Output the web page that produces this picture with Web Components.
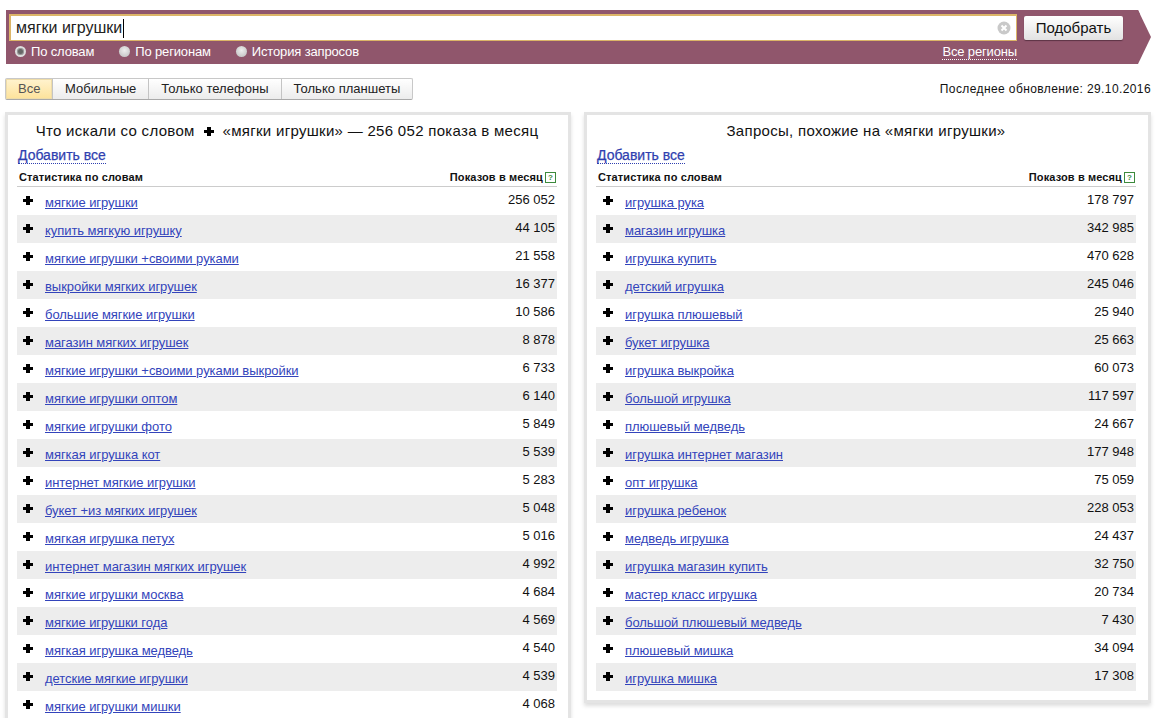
<!doctype html>
<html>
<head>
<meta charset="utf-8">
<style>
  html, body { margin: 0; height: 718px; overflow: hidden; background: #fff; }
  body { font: 13px "Liberation Sans", Arial, sans-serif; color: #000; }
</style>
</head>
<body>
<wp-search-bar query="мягки игрушки"></wp-search-bar>
<wp-toolbar updated="29.10.2016"></wp-toolbar>
<wp-results></wp-results>

<script>
class WpSearchBar extends HTMLElement {
  constructor() {
    super();
    this.attachShadow({ mode: "open" });
    const query = this.getAttribute("query");
    this.shadowRoot.innerHTML = `
      <style>
        :host { display: block; margin: 10px 14px 0 6px; height: 54px; box-sizing: border-box; background: #90566c; border-top: 4px solid #90566c; clip-path: polygon(0 0, 1132px 0, 1145px 27px, 1132px 54px, 0 54px); padding-left: 3px; }
        .top { display: flex; align-items: center; height: 27px; }
        .input { width: 1008px; height: 27px; box-sizing: border-box; border: 2px solid #dcb568; border-right-width: 1px; border-bottom-width: 1px; background: #fff; display: flex; align-items: center; padding: 0 5px; font-size: 16px; color: #222; }
        .caret { width: 1px; height: 19px; background: #000; margin-left: 1px; }
        .clear { margin-left: auto; }
        button { margin-left: 7px; width: 99px; height: 24px; border: 0; border-radius: 2px; padding: 0; font: 15px "Liberation Sans", Arial, sans-serif; color: #111; background: linear-gradient(#fff, #e2e2e2); box-shadow: 0 1px 1px #5d3345; }
        .opts { display: flex; align-items: flex-start; width: 1008px; box-sizing: border-box; height: 23px; padding: 3px 0 0 6px; color: #fff; font-size: 13px; line-height: 15px; }
        .opt { display: flex; align-items: center; gap: 5px; margin-right: 25px; letter-spacing: -0.15px; }
        .radio { width: 11px; height: 11px; border-radius: 50%; background: radial-gradient(circle at 50% 40%, #eee, #bbb); box-sizing: border-box; }
        .radio.on { background: #666; border: 2px solid #ddd; box-shadow: inset 0 0 0 1px #999; }
        .all { margin-left: auto; color: #fff; border-bottom: 1px dotted #fff; line-height: 15px; letter-spacing: -0.15px; }
      </style>
      <div class="top">
        <div class="input"><span>${query}</span><span class="caret"></span>
          <svg class="clear" width="14" height="14" viewBox="0 0 14 14"><circle cx="7" cy="7" r="6.5" fill="#c9c9c9"/><path d="M4.5 4.5l5 5M9.5 4.5l-5 5" stroke="#fff" stroke-width="2"/></svg>
        </div>
        <button>Подобрать</button>
      </div>
      <div class="opts">
        <span class="opt"><span class="radio on"></span>По словам</span>
        <span class="opt"><span class="radio"></span>По регионам</span>
        <span class="opt"><span class="radio"></span>История запросов</span>
        <span class="all">Все регионы</span>
      </div>
    `;
  }
}

class WpToolbar extends HTMLElement {
  constructor() {
    super();
    this.attachShadow({ mode: "open" });
    this.shadowRoot.innerHTML = `
      <style>
        :host { display: flex; align-items: center; justify-content: space-between; margin: 14px 14px 0 5px; height: 22px; }
        .tabs { display: flex; height: 22px; box-sizing: border-box; border: 1px solid #c8c8c8; border-bottom-color: #a9a9a9; border-radius: 2px; background: linear-gradient(#fff, #ececec); }
        .tab { padding: 0 12px; line-height: 20px; color: #222; border-left: 1px solid #c4c4c4; letter-spacing: 0.03px; }
        .tab:first-child { border-left: 0; width: 22px; color: #555; background: linear-gradient(#fff3cf, #fde29a); box-shadow: inset 0 0 0 1px #eedca8; }
        .upd { font-size: 12px; letter-spacing: 0.4px; color: #111; }
      </style>
      <div class="tabs">
        <span class="tab">Все</span><span class="tab">Мобильные</span><span class="tab">Только телефоны</span><span class="tab">Только планшеты</span>
      </div>
      <span class="upd">Последнее обновление: ${this.getAttribute("updated")}</span>
    `;
  }
}

const plusSvg = `<svg width="10" height="9" viewBox="0 0 10 9"><path d="M3 0h4v3h3v3H7v3H3V6H0V3h3z" fill="#000"/></svg>`;

class WpRow extends HTMLElement {
  constructor() {
    super();
    this.attachShadow({ mode: "open" });
    this.shadowRoot.innerHTML = `
      <style>
        :host { display: flex; height: 28px; }
        :host(:nth-child(even)) { background: #ededed; }
        .plus { width: var(--plus-width, 28px); padding: 9px 0 0 var(--plus-left, 6px); box-sizing: border-box; line-height: 0; }
        a { margin-top: 8px; line-height: 15px; height: 15px; color: #3344bb; text-decoration: underline; white-space: nowrap; letter-spacing: -0.05px; }
        .n { margin-left: auto; padding: 5px 2px 0 0; line-height: 15px; color: #111; }
      </style>
      <span class="plus">${plusSvg}</span>
      <a><slot></slot></a>
      <span class="n">${this.getAttribute("n")}</span>
    `;
  }
}

class WpPanel extends HTMLElement {
  constructor() {
    super();
    this.attachShadow({ mode: "open" });
    this.shadowRoot.innerHTML = `
      <style>
        :host { display: block; width: 566px; box-sizing: border-box; border: 3px solid #e4e4e4; padding: 0 11px 9px 9px; background: #fff; box-shadow: 0 3px 4px #0002; }
        .title { height: 30px; padding-top: 5px; box-sizing: border-box; font-size: 15px; line-height: 21px; text-align: center; color: #111; letter-spacing: 0.3px; white-space: nowrap; }
        .add { margin-top: 3px; height: 16px; }
        .add span { font-size: 14px; line-height: 15px; color: #2f3fb0; border-bottom: 1px dotted #2f3fb0; display: inline-block; -webkit-text-stroke: 0.25px #2f3fb0; margin-left: 1px; }
        .head { display: flex; justify-content: space-between; margin-top: 3px; height: 16px; padding: 3px 1px 0 2px; border-bottom: 1px solid #ccc; font-size: 11px; line-height: 15px; font-weight: bold; letter-spacing: 0.12px; color: #111; }
        .q { display: inline-block; width: 9px; height: 9px; border: 1px solid #3c8a3c; color: #3c8a3c; font-size: 8px; line-height: 9px; text-align: center; vertical-align: 1px; margin-left: 2px; letter-spacing: 0; }
      </style>
      <div class="title"><slot name="title"></slot></div>
      <div class="add"><span>Добавить все</span></div>
      <div class="head"><span>Статистика по словам</span><span>Показов в месяц<span class="q">?</span></span></div>
      <slot></slot>
    `;
  }
}

class WpResults extends HTMLElement {
  constructor() {
    super();
    this.attachShadow({ mode: "open" });
    const left = [["мягкие игрушки","256 052"],["купить мягкую игрушку","44 105"],["мягкие игрушки +своими руками","21 558"],["выкройки мягких игрушек","16 377"],["большие мягкие игрушки","10 586"],["магазин мягких игрушек","8 878"],["мягкие игрушки +своими руками выкройки","6 733"],["мягкие игрушки оптом","6 140"],["мягкие игрушки фото","5 849"],["мягкая игрушка кот","5 539"],["интернет мягкие игрушки","5 283"],["букет +из мягких игрушек","5 048"],["мягкая игрушка петух","5 016"],["интернет магазин мягких игрушек","4 992"],["мягкие игрушки москва","4 684"],["мягкие игрушки года","4 569"],["мягкая игрушка медведь","4 540"],["детские мягкие игрушки","4 539"],["мягкие игрушки мишки","4 068"]];
    const right = [["игрушка рука","178 797"],["магазин игрушка","342 985"],["игрушка купить","470 628"],["детский игрушка","245 046"],["игрушка плюшевый","25 940"],["букет игрушка","25 663"],["игрушка выкройка","60 073"],["большой игрушка","117 597"],["плюшевый медведь","24 667"],["игрушка интернет магазин","177 948"],["опт игрушка","75 059"],["игрушка ребенок","228 053"],["медведь игрушка","24 437"],["игрушка магазин купить","32 750"],["мастер класс игрушка","20 734"],["большой плюшевый медведь","7 430"],["плюшевый мишка","34 094"],["игрушка мишка","17 308"]];
    const rows = list => `<div class="rows">` + list.map(r => `<wp-row n="${r[1]}">${r[0]}</wp-row>`).join("") + `</div>`;
    this.shadowRoot.innerHTML = `
      <style>
        :host { display: flex; align-items: flex-start; gap: 13px; margin: 12px 0 0 5px; }
        wp-panel:last-child { padding-right: 12px; width: 567px; --plus-width: 29px; --plus-left: 7px; }
      </style>
      <wp-panel>
        <span slot="title">Что искали со словом &nbsp;<svg width="10" height="9" viewBox="0 0 10 9"><path d="M3 0h4v3h3v3H7v3H3V6H0V3h3z" fill="#000"/></svg>&nbsp; «мягки игрушки» — 256 052 показа в месяц</span>
        ${rows(left)}
      </wp-panel>
      <wp-panel>
        <span slot="title">Запросы, похожие на «мягки игрушки»</span>
        ${rows(right)}
      </wp-panel>
    `;
  }
}

customElements.define("wp-search-bar", WpSearchBar);
customElements.define("wp-toolbar", WpToolbar);
customElements.define("wp-row", WpRow);
customElements.define("wp-panel", WpPanel);
customElements.define("wp-results", WpResults);
</script>
</body>
</html>
